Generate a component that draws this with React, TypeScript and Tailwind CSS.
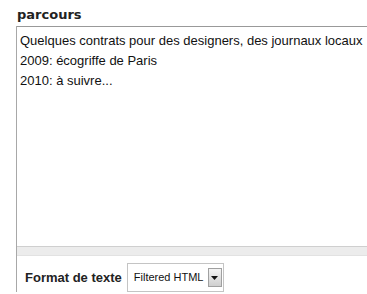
export default function App() {
  return (
    <div className="w-[367px] h-[294px] overflow-hidden bg-white font-['Liberation_Sans',Arial,sans-serif] text-[#222]">
      <div className="pt-[6px] pl-[17px] text-[13px] font-bold leading-[18px] font-['DejaVu_Sans',sans-serif]">
        parcours
      </div>
      <div className="ml-[16px] mt-[2px] w-[400px] border-l border-[#a8a8a8]">
        <div className="h-[220px] border-t border-[#999] pl-[3px] pt-[4px] text-[13px] leading-[20px] text-[#111] whitespace-nowrap">
          <div>Quelques contrats pour des designers, des journaux locaux</div>
          <div>2009: écogriffe de Paris</div>
          <div>2010: à suivre...</div>
        </div>
        <div className="h-[10px] border-t border-[#cfcfcf] border-b border-b-[#e2e2e2] bg-[#ececec]" />
        <div className="flex items-center pl-[8px] pt-[7px]">
          <span className="text-[13px] font-bold text-[#222]">Format de texte</span>
          <div className="ml-[5px] flex items-center h-[29px] w-[97px] border border-[#c4c4c4] bg-white pl-[6px] pr-[1px]">
            <span className="text-[11px] text-[#111] flex-1">Filtered HTML</span>
            <div className="w-[14px] h-[19px] border border-[#a0a0a0] bg-gradient-to-b from-[#f4f4f4] to-[#cfcfcf] flex items-center justify-center">
              <svg width="7" height="4" viewBox="0 0 7 4"><path d="M0 0h7L3.5 4z" fill="#111" /></svg>
            </div>
          </div>
        </div>
      </div>
    </div>
  )
}
